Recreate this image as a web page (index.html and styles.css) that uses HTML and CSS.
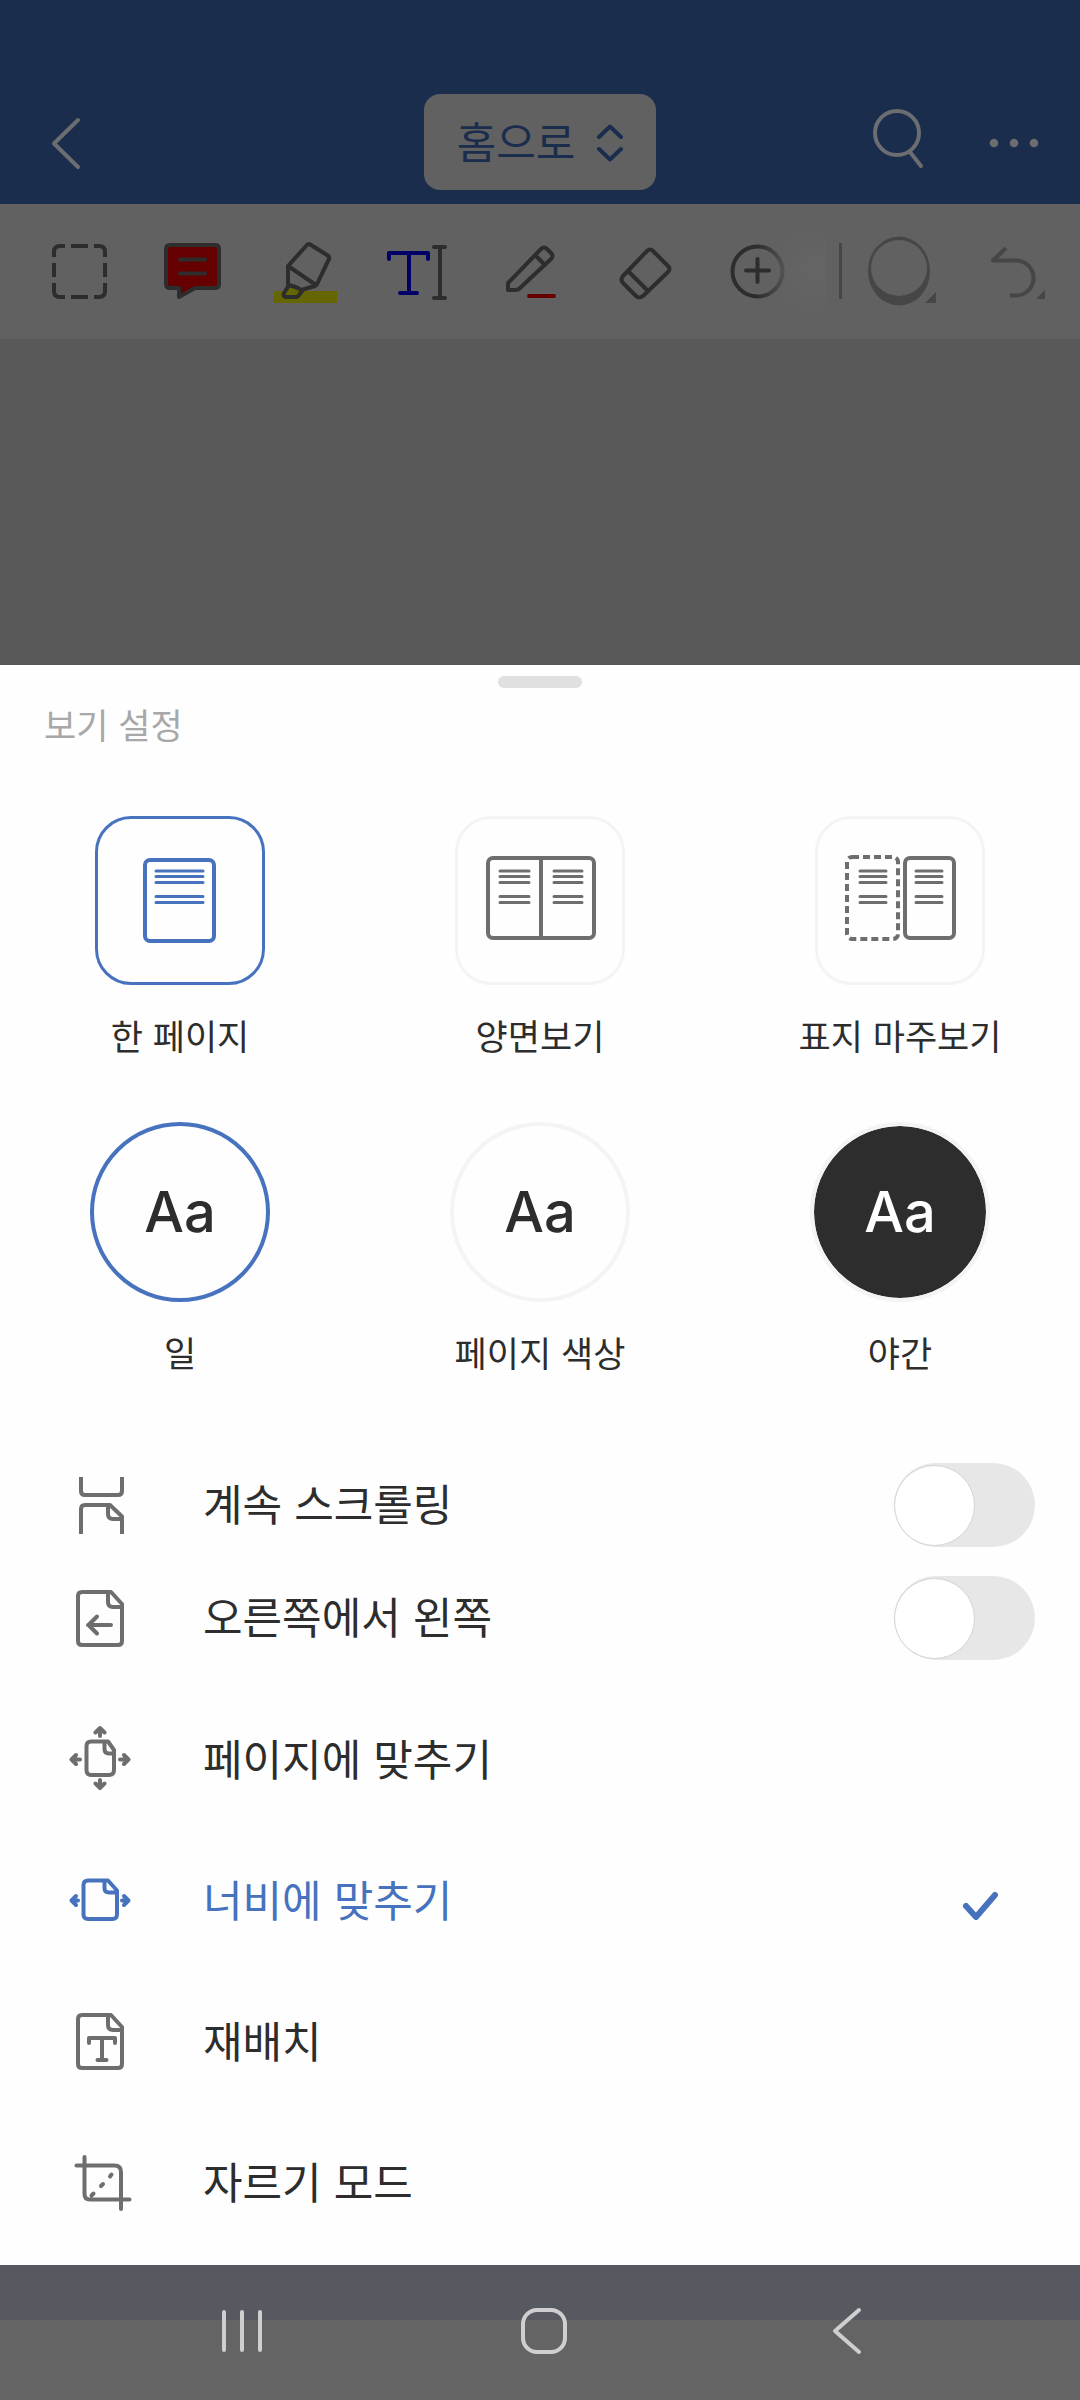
FILE: index.html
```html
<!DOCTYPE html>
<html lang="ko">
<head>
<meta charset="utf-8">
<meta name="viewport" content="width=device-width, initial-scale=1">
<title>보기 설정</title>
<link rel="stylesheet" href="styles.css">
</head>
<body>
<div class="screen">
  <header class="topbar">
    <div class="topbar-side">
      <button class="icon-button" type="button" aria-label="뒤로">
        <svg width="72" height="72" viewBox="0 0 72 72"><path d="M48 14 24 37.500 48 61"/></svg>
      </button>
    </div>
    <button class="mode-button" type="button">
      <span>홈으로</span>
      <svg width="40" height="40" viewBox="0 0 40 40"><path d="M9 15 20 4.500 31 15M9 27 20 37.500 31 27"/></svg>
    </button>
    <div class="topbar-side topbar-actions">
      <button class="icon-button" type="button" aria-label="검색">
        <svg width="72" height="72" viewBox="0 0 72 72"><circle cx="31" cy="27" r="22"/><path d="M44 46 55 60"/></svg>
      </button>
      <button class="icon-button" type="button" aria-label="더 보기">
        <svg class="dots" width="72" height="72" viewBox="0 0 72 72"><circle cx="16" cy="37" r="4.300"/><circle cx="36" cy="37" r="4.300"/><circle cx="56" cy="37" r="4.300"/></svg>
      </button>
    </div>
  </header>

  <div class="toolbar">
    <div class="tools">
      <button class="tool" type="button" aria-label="선택">
        <svg class="flat" width="73" height="72" viewBox="0 0 73 72"><path d="M22 11h-5q-6 0-6 6v5M28 11h17M51 11h5q6 0 6 6v5M62 28v14M62 48v8q0 6-6 6h-5M45 62H28M22 62h-5q-6 0-6-6v-8M11 42V28"/></svg>
      </button>
      <button class="tool" type="button" aria-label="메모">
        <svg width="73" height="72" viewBox="0 0 73 72"><path class="note" d="M14 10h45q4 0 4 4v35q0 4-4 4H39L23 62v-9h-9q-4 0-4-4V14q0-4 4-4z"/><path d="M24 24.500h25M24 38.500h25"/></svg>
      </button>
      <button class="tool" type="button" aria-label="형광펜">
        <svg width="73" height="72" viewBox="0 0 73 72"><path class="yellow" d="M5 56h63v12H5z"/><path class="yellow" d="M20 50l12 5-6 7H15z"/><path d="M19 31 37 11q2-3 5-1l16 10q3 2 2 4L49 47q-1 3-3 4l-14 4M19 31v19M19 31l28 19M20 50l-5 8q-1 4 2 4h9q3 0 4-2l3-4q-2-3-13-6z"/></svg>
      </button>
      <button class="tool" type="button" aria-label="텍스트">
        <svg width="73" height="72" viewBox="0 0 73 72"><path class="blue" d="M7 24v-6h39v6M27 18v40M18 58h17"/><path d="M58 12v51M52 12h11M52 63h11"/></svg>
      </button>
      <button class="tool" type="button" aria-label="펜">
        <svg width="73" height="72" viewBox="0 0 73 72"><path d="M13 55v-7l33-34q3-3 6 0l4 4q3 3 0 6L25 53q-2 2-4 2zM40 20l10 10"/><path class="red" d="M34 61h25"/></svg>
      </button>
      <button class="tool" type="button" aria-label="지우개">
        <svg width="73" height="72" viewBox="0 0 73 72"><path d="M39 16q3-3 6 0l15 15q3 3 0 6L35 61q-4 3-7 0L15 48q-3-3 0-7zM20 36l20 20"/></svg>
      </button>
      <button class="tool" type="button" aria-label="추가">
        <svg width="73" height="72" viewBox="0 0 73 72">
          <defs><linearGradient id="fade"><stop offset="0.500" stop-color="#2d2d2d"/><stop offset="1" stop-color="#505050"/></linearGradient></defs>
          <circle class="faded" cx="36.500" cy="36.500" r="25"/><path d="M25 35.500h23M36.500 24v23"/></svg>
      </button>
    </div>
    <span class="tools-glow"></span>
    <span class="divider"></span>
    <button class="tool tool-wide" type="button" aria-label="색상">
      <svg class="solid" width="72" height="72" viewBox="0 0 72 72"><path fill-rule="evenodd" d="M2 36a31 34.500 0 1 1 62 0a31 34.500 0 1 1-62 0zM5 33a28 28 0 1 0 56 0a28 28 0 1 0-56 0z"/><path d="M70 57v11H59z"/></svg>
    </button>
    <button class="tool tool-wide" type="button" aria-label="실행 취소">
      <svg class="dim" width="72" height="72" viewBox="0 0 72 72"><path d="M24 13 11 25.500h23a17.500 17.500 0 0 1 0 35h-6"/><path class="corner" d="M63 55v9h-9z"/></svg>
    </button>
  </div>

  <main class="canvas"></main>

  <section class="sheet" aria-labelledby="sheet-title">
    <div class="handle"></div>
    <h1 class="sheet-title" id="sheet-title">보기 설정</h1>

    <div class="choices" role="radiogroup" aria-label="페이지 배치">
      <label class="choice">
        <span class="preview">
          <input class="box" type="radio" name="layout" checked>
          <svg class="page-icon" width="170" height="169" viewBox="0 0 170 169"><rect x="50" y="44" width="69" height="81" rx="5"/><path class="thin" d="M61 55h47M61 60.500h47M61 66.500h47M61 80.500h47M61 86.500h47"/></svg>
        </span>
        <span class="caption">한 페이지</span>
      </label>
      <label class="choice">
        <span class="preview">
          <input class="box" type="radio" name="layout">
          <svg class="page-icon" width="170" height="169" viewBox="0 0 170 169"><rect x="33" y="42" width="106" height="80" rx="5"/><path d="M86 42v80"/><path class="thin" d="M45 55h29M45 60.500h29M45 66.500h29M45 80.500h29M45 86.500h29M99 55h28M99 60.500h28M99 66.500h28M99 80.500h28M99 86.500h28"/></svg>
        </span>
        <span class="caption">양면보기</span>
      </label>
      <label class="choice">
        <span class="preview">
          <input class="box" type="radio" name="layout">
          <svg class="page-icon" width="170" height="169" viewBox="0 0 170 169"><rect class="dashed" x="32" y="41" width="51" height="82" rx="5"/><rect x="90" y="42" width="49" height="80" rx="5"/><path class="thin" d="M45 55h26M45 60.500h26M45 66.500h26M45 80.500h26M45 86.500h26M101 55h26M101 60.500h26M101 66.500h26M101 80.500h26M101 86.500h26"/></svg>
        </span>
        <span class="caption">표지 마주보기</span>
      </label>
    </div>

    <div class="choices choices-color" role="radiogroup" aria-label="색상 모드">
      <label class="choice">
        <span class="preview">
          <input class="disc" type="radio" name="color" checked>
          <span class="sample">Aa</span>
        </span>
        <span class="caption">일</span>
      </label>
      <label class="choice">
        <span class="preview">
          <input class="disc" type="radio" name="color">
          <span class="sample">Aa</span>
        </span>
        <span class="caption">페이지 색상</span>
      </label>
      <label class="choice">
        <span class="preview">
          <input class="disc disc-night" type="radio" name="color">
          <span class="sample sample-night">Aa</span>
        </span>
        <span class="caption">야간</span>
      </label>
    </div>

    <div class="switches">
      <label class="row row-switch">
        <svg class="row-icon flat" width="72" height="71" viewBox="0 0 72 71"><path d="M17 8v14q0 4 4 4h33q4 0 4-4V8M17 65V40q0-4 4-4h25l12 11.500V65M44 36v9q0 5 5 5h9"/></svg>
        <span class="row-text">계속 스크롤링</span>
        <input class="switch" type="checkbox" role="switch">
      </label>
      <label class="row row-switch">
        <svg class="row-icon" width="72" height="71" viewBox="0 0 72 71"><path d="M18 10h29l11 12v37q0 4-4 4H18q-4 0-4-4V14q0-4 4-4zM44 10v10q0 5 5 5h9M47 43H24M33 34.500 24.500 43l8.500 8.500"/></svg>
        <span class="row-text">오른쪽에서 왼쪽</span>
        <input class="switch" type="checkbox" role="switch">
      </label>
    </div>

    <div class="actions">
      <button class="row" type="button">
        <svg class="row-icon" width="72" height="71" viewBox="0 0 72 71"><path d="M27 17.500h17l6 8.500v20q0 5-5 5H27q-4.500 0-4.500-5V22q0-4.500 4.500-4.500zM40.500 17.500V25q0 4.500 4.500 4.500h5M36 4v8M31.500 8.500 36 4l4.500 4.500M36 56v8M31.500 59.500 36 64l4.500-4.500M8 35.500h8M12 31l-4.500 4.500L12 40M56 35.500h8M60 31l4.500 4.500L60 40"/></svg>
        <span class="row-text">페이지에 맞추기</span>
      </button>
      <button class="row row-selected" type="button" aria-pressed="true">
        <svg class="row-icon" width="72" height="71" viewBox="0 0 72 71"><path d="M24 15.500h20l9 10v24q0 4.500-4.500 4.500H24q-4.500 0-4.500-4.500V20q0-4.500 4.500-4.500zM40.500 15.500V23q0 4.500 4.500 4.500h7M8 35.500h6M12 31l-4.500 4.500L12 40M58 35.500h6M60 31l4.500 4.500L60 40"/></svg>
        <span class="row-text">너비에 맞추기</span>
        <svg class="check" width="48" height="47" viewBox="0 0 48 47"><path d="M8 29 18 40 37 18"/></svg>
      </button>
      <button class="row" type="button">
        <svg class="row-icon" width="72" height="71" viewBox="0 0 72 71"><path d="M18 9h29l11 12v37q0 4-4 4H18q-4 0-4-4V13q0-4 4-4zM44 9v10q0 5 5 5h9M25 37v-5h26v5M38 32v22M33.500 54h9"/></svg>
        <span class="row-text">재배치</span>
      </button>
      <button class="row" type="button">
        <svg class="row-icon" width="72" height="71" viewBox="0 0 72 71"><path d="M20.500 10v37q0 5.500 5.500 5.500H65.500M12.500 18.500h38q6.500 0 6.500 6.500v37M27.500 48.500l2-2M37 39l2-2M46 29.500l1.500-2"/></svg>
        <span class="row-text">자르기 모드</span>
      </button>
    </div>
  </section>

  <nav class="navbar" aria-label="시스템">
    <button class="icon-button" type="button" aria-label="최근 앱">
      <svg width="60" height="60" viewBox="0 0 60 60"><path d="M12 10v38M30 10v38M48 10v38"/></svg>
    </button>
    <button class="icon-button" type="button" aria-label="홈">
      <svg width="60" height="60" viewBox="0 0 60 60"><rect x="9" y="8" width="42" height="42" rx="14"/></svg>
    </button>
    <button class="icon-button" type="button" aria-label="뒤로">
      <svg width="60" height="60" viewBox="0 0 60 60"><path d="M42 8 18 29l24 21"/></svg>
    </button>
  </nav>
</div>
</body>
</html>
```
FILE: styles.css
```css
* {
  box-sizing: border-box;
}

body {
  margin: 0;
  background: #595959;
  color: #2d2d2d;
  font-family: "Noto Sans CJK KR", sans-serif;
}

button {
  margin: 0;
  padding: 0;
  border: 0;
  background: none;
  color: inherit;
  font: inherit;
  text-align: left;
}

svg {
  display: block;
  flex: none;
  fill: none;
  stroke: currentColor;
  stroke-width: 4;
  stroke-linecap: round;
  stroke-linejoin: round;
}

.flat {
  stroke-linecap: butt;
}

.screen {
  display: flex;
  flex-direction: column;
  min-height: 100vh;
}

/* Title bar */
.topbar {
  display: grid;
  grid-template-columns: 1fr auto 1fr;
  align-items: center;
  padding: 94px 30px 14px;
  background: #1b2d4d;
  color: #6b6d70;
}

.topbar-side {
  display: flex;
}

.topbar-actions {
  justify-content: flex-end;
  gap: 40px;
}

.mode-button {
  display: flex;
  align-items: center;
  gap: 15px;
  height: 96px;
  padding: 0 26px 0 33px;
  border-radius: 16px;
  background: #616161;
  color: #1b2d4d;
  font-size: 43px;
  line-height: 64px;
}

.mode-button span {
  padding-bottom: 4px;
}

.dots {
  fill: currentColor;
  stroke: none;
}

/* Annotation tools */
.toolbar {
  display: flex;
  align-items: center;
  padding: 22px 4px 23px 23px;
  background: #616161;
  color: #2d2d2d;
}

.tools {
  z-index: 1;
  display: grid;
  flex: 1;
  grid-template-columns: repeat(7, 1fr);
}

.tool {
  display: grid;
  justify-content: center;
}

.tool-wide {
  width: 116px;
  color: #464646;
}

.tools-glow {
  width: 50px;
  height: 90px;
  margin: 0 13px 0 -38px;
  background: radial-gradient(circle at 40px 45px, #656565, #616161 46px);
}

.divider {
  width: 3px;
  height: 56px;
  margin-right: 2px;
  background: #464646;
}

.note {
  fill: #660000;
}

.yellow {
  fill: #666600;
  stroke: none;
}

.blue {
  stroke: #000066;
}

.red {
  stroke: #660000;
}

.faded {
  stroke: url(#fade);
}

.solid,
.corner {
  fill: currentColor;
  stroke: none;
}

.dim {
  stroke-linecap: butt;
}

.canvas {
  flex: 1;
}

/* View settings sheet */
.sheet {
  padding: 11px 0 12px;
  background: #fefefe;
}

.handle {
  width: 84px;
  height: 12px;
  margin: 0 auto;
  border-radius: 6px;
  background: #e0e0e0;
}

.sheet-title {
  margin: 12px 44px 68px;
  color: #a8a8a8;
  font-size: 35px;
  font-weight: 400;
  line-height: 48px;
}

.choices {
  display: grid;
  grid-template-columns: repeat(3, 1fr);
}

.choices-color {
  margin: 63px 0 72px;
}

.choice {
  display: flex;
  flex-direction: column;
  align-items: center;
  gap: 26px;
}

.preview {
  display: grid;
  place-items: center;
}

.preview > * {
  grid-area: 1 / 1;
}

.box,
.disc {
  appearance: none;
  margin: 0;
  border-style: solid;
  border-color: #f4f4f4;
}

.box {
  width: 170px;
  height: 169px;
  border-width: 3px;
  border-radius: 36px;
}

.disc {
  width: 180px;
  height: 180px;
  border-width: 4px;
  border-radius: 50%;
}

.disc-night {
  background: #2d2d2d;
  background-clip: padding-box;
}

.box:checked,
.disc:checked {
  border-color: #4672be;
}

.page-icon {
  color: #6e6e6e;
  pointer-events: none;
}

.box:checked + .page-icon {
  color: #4672be;
}

.thin {
  stroke-width: 3;
}

.dashed {
  stroke-dasharray: 7 4;
  stroke-linecap: butt;
}

.sample {
  font-family: Inter, sans-serif;
  font-size: 56px;
  font-weight: 500;
  line-height: 64px;
  pointer-events: none;
}

.sample-night {
  color: #fefefe;
}

.caption {
  font-size: 35px;
  line-height: 48px;
}

/* Option rows */
.switches {
  margin-bottom: 15px;
}

.row {
  display: flex;
  align-items: center;
  width: 100%;
  height: 141px;
  padding: 0 45px 0 64px;
}

.row-switch {
  height: 113px;
}

.row-icon {
  color: #6e6e6e;
}

.row-text {
  flex: 1;
  margin-left: 67px;
  padding-bottom: 5px;
  font-size: 43px;
  line-height: 64px;
}

.row-selected,
.row-selected .row-icon {
  color: #4672be;
}

.check {
  margin-right: 29px;
  stroke-width: 6;
}

.switch {
  appearance: none;
  width: 141px;
  height: 84px;
  margin: 0;
  padding: 2px 0;
  border-radius: 42px;
  background: #e7e7e7;
}

.switch::before {
  content: "";
  display: block;
  width: 79px;
  height: 79px;
  border: 1px solid #d4d4d4;
  border-radius: 50%;
  background: #ffffff;
}

.switch:checked::before {
  margin-left: auto;
}

/* System navigation */
.navbar {
  display: grid;
  grid-template-columns: repeat(3, 1fr);
  justify-items: center;
  padding: 37px 82px 38px 91px;
  background: linear-gradient(#575960 55px, #646464 55px);
  color: #cfcfcf;
}
```
